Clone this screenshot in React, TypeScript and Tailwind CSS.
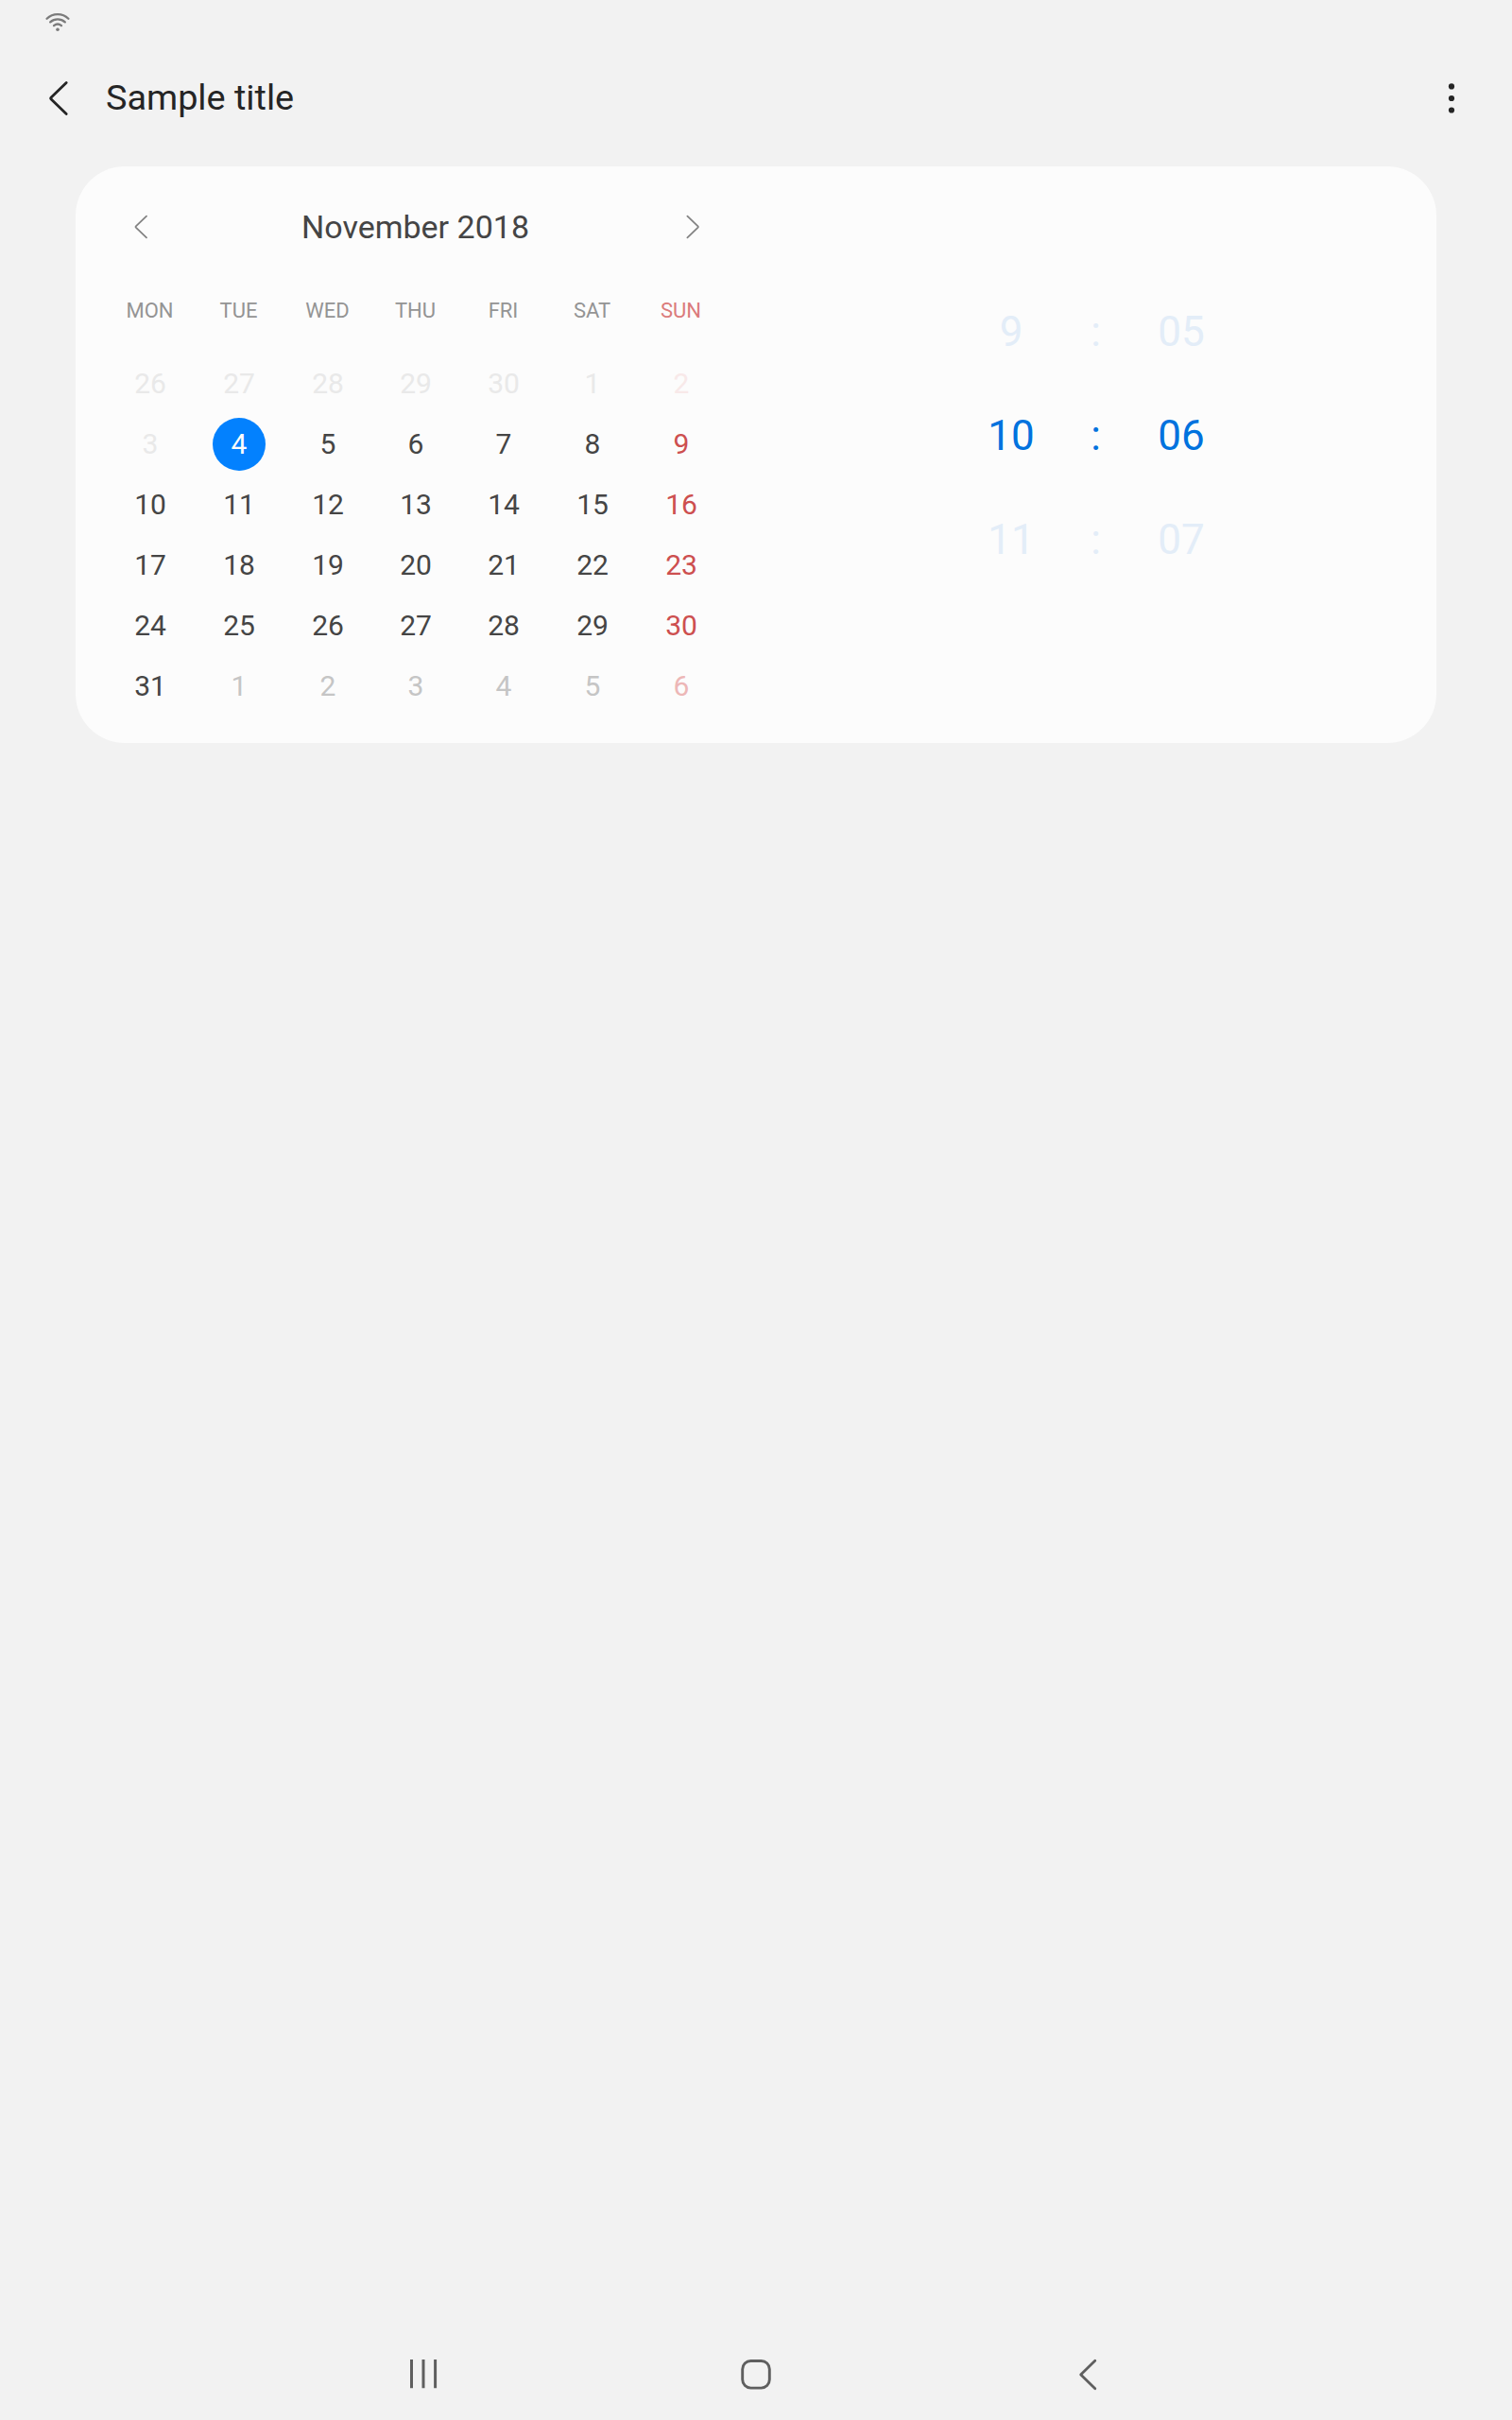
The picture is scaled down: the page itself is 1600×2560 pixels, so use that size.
import React from "react";

const weekdays = ["MON", "TUE", "WED", "THU", "FRI", "SAT", "SUN"];

type Kind = "normal" | "disabled" | "next" | "selected";
type Day = { n: number; kind: Kind };

const make = (from: number, to: number, kind: Kind): Day[] =>
  Array.from({ length: to - from + 1 }, (_, i) => ({ n: from + i, kind }));

const days: Day[] = [
  ...make(26, 30, "disabled"),
  ...make(1, 3, "disabled"),
  { n: 4, kind: "selected" },
  ...make(5, 31, "normal"),
  ...make(1, 6, "next"),
];

const weekdayColor: Record<Kind, string> = {
  normal: "text-[#454545]",
  disabled: "text-[#e9e9e9]",
  next: "text-[#c5c5c5]",
  selected: "text-[#fcfcfc]",
};

const sundayColor: Record<Kind, string> = {
  normal: "text-[#cd4f4f]",
  disabled: "text-[#f8e9e9]",
  next: "text-[#edb7b7]",
  selected: "text-[#fcfcfc]",
};

const times = [
  { h: "9", m: "05", active: false },
  { h: "10", m: "06", active: true },
  { h: "11", m: "07", active: false },
];

function StatusBar() {
  return (
    <div className="flex h-12 pl-12">
      <svg className="h-12 w-[26px]" viewBox="48 0 26 48" fill="none" stroke="#7b7b7b" strokeWidth="2.3" strokeLinecap="round">
        <path d="M49.6 19.8A16.2 16.2 0 0 1 72.4 19.8" />
        <path d="M53.2 23.4A11.6 11.6 0 0 1 68.8 23.4" />
        <path d="M57 27.1A6.4 6.4 0 0 1 65 27.1" />
        <circle cx="61" cy="31.2" r="1.8" fill="#7b7b7b" stroke="none" />
      </svg>
    </div>
  );
}

function AppBar() {
  return (
    <header className="flex h-28 items-center justify-between pl-12 pr-[60px]">
      <div className="flex items-center">
        <button aria-label="Back">
          <svg className="h-12 w-7" viewBox="0 0 28 48" fill="none" stroke="#252525" strokeWidth="2.8" strokeLinecap="round">
            <path d="M22.2 7.4L6.2 23Q5.2 24 6.2 25L22.2 40.6" />
          </svg>
        </button>
        <h1 className="pb-0.5 pl-9 text-[37.8px] leading-[46px] text-[#252525]">Sample title</h1>
      </div>
      <button aria-label="More options">
        <svg className="h-8 w-2" viewBox="0 0 8 32" fill="#252525">
          <circle cx="4" cy="3.4" r="3.1" />
          <circle cx="4" cy="16" r="3.1" />
          <circle cx="4" cy="28.5" r="3.1" />
        </svg>
      </button>
    </header>
  );
}

function MonthArrow({ next }: { next?: boolean }) {
  return (
    <button aria-label={next ? "Next month" : "Previous month"}>
      <svg className="h-8 w-4" viewBox="0 0 16 32" fill="none" stroke="#838383" strokeWidth="1.8" strokeLinecap="round">
        <path d={next ? "M2.4 4.7L13.6 15.3Q14.3 16 13.6 16.7L2.4 27.3" : "M14 4.7L2.8 15.3Q2.1 16 2.8 16.7L14 27.3"} />
      </svg>
    </button>
  );
}

function Calendar() {
  return (
    <section className="w-[656px]">
      <div className="flex h-32 items-center justify-between pl-[29px] pr-[27px]">
        <MonthArrow />
        <h2 className="pr-[3px] text-[34px] leading-10 text-[#454545]">November 2018</h2>
        <MonthArrow next />
      </div>
      <div className="grid grid-cols-[94px_94px_94px_92px_94px_94px_94px] text-center">
        {weekdays.map((d) => (
          <div key={d} className={`h-[70px] pr-px pt-3 text-[22px] leading-[26px] ${d === "SUN" ? "text-[#db7b7b]" : "text-[#949494]"}`}>
            {d}
          </div>
        ))}
        {days.map((d, i) => (
          <div key={i} className="flex h-16 items-center justify-center">
            <span
              className={`flex size-14 items-center justify-center rounded-full text-[30px] leading-9 ${
                i % 7 === 6 ? sundayColor[d.kind] : weekdayColor[d.kind]
              } ${d.kind === "selected" ? "bg-[#0381fe]" : ""}`}
            >
              {d.n}
            </span>
          </div>
        ))}
      </div>
    </section>
  );
}

function TimePicker() {
  return (
    <section className="ml-[212px] mt-[120px] w-[360px]">
      {times.map((t) => (
        <div
          key={t.m}
          className={`grid h-[110px] grid-cols-[180px_0px_180px] items-center justify-items-center text-[44px] leading-[54px] ${
            t.active ? "text-[#0072de]" : "text-[#e3edf8]"
          }`}
        >
          <span>{t.h}</span>
          <span className="pr-px">:</span>
          <span>{t.m}</span>
        </div>
      ))}
    </section>
  );
}

function NavBar() {
  return (
    <nav className="flex h-24 items-center justify-center gap-[304px]">
      <svg className="size-12" viewBox="0 0 48 48" fill="none" stroke="#5f5f5f" strokeWidth="3">
        <path d="M11.5 8V38.2M24 8V38.2M36.6 8V38.2" />
      </svg>
      <svg className="size-12" viewBox="0 0 48 48" fill="none" stroke="#5f5f5f" strokeWidth="2.9">
        <rect x="9.7" y="9.5" width="28.6" height="28.6" rx="8.8" />
      </svg>
      <svg className="size-12" viewBox="0 0 48 48" fill="none" stroke="#5f5f5f" strokeWidth="2.8" strokeLinecap="round" strokeLinejoin="round">
        <path d="M30.8 9.2L15.7 24L30.8 38.8" />
      </svg>
    </nav>
  );
}

export default function App() {
  return (
    <div className="flex h-[2560px] w-[1600px] flex-col bg-[#f2f2f2] font-['Roboto',sans-serif]">
      <StatusBar />
      <AppBar />
      <main className="flex-1 px-20 pt-4">
        <div className="flex h-[610px] rounded-[52px] bg-[#fcfcfc] pl-8">
          <Calendar />
          <TimePicker />
        </div>
      </main>
      <NavBar />
    </div>
  );
}
